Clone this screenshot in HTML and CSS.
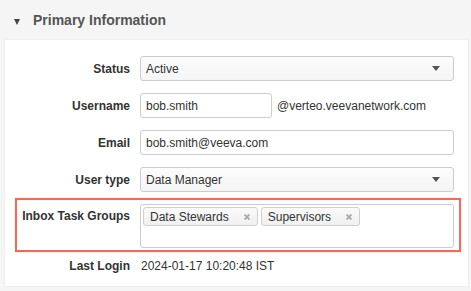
FILE: index.html
```html
<!DOCTYPE html>
<html lang="en">
<head>
    <meta charset="UTF-8">
    <meta name="viewport" content="width=device-width, initial-scale=1.0">
    <title>Primary Information</title>
    <link rel="stylesheet" href="styles.css">
</head>
<body>

    <div class="section-header">
        <span class="caret"></span>
        <span class="section-title">Primary Information</span>
    </div>

    <div class="panel">
        <div class="row">
            <label class="label">Status</label>
            <div class="select">
                <span>Active</span>
                <span class="arrow"></span>
            </div>
        </div>

        <div class="row">
            <label class="label">Username</label>
            <div class="inline">
                <div class="input short">bob.smith</div>
                <span class="suffix">@verteo.veevanetwork.com</span>
            </div>
        </div>

        <div class="row">
            <label class="label">Email</label>
            <div class="input">bob.smith@veeva.com</div>
        </div>

        <div class="row">
            <label class="label">User type</label>
            <div class="select">
                <span>Data Manager</span>
                <span class="arrow"></span>
            </div>
        </div>

        <div class="row highlight">
            <label class="label top">Inbox Task Groups</label>
            <div class="multi">
                <span class="tag">
                    Data Stewards
                    <svg class="remove" width="6" height="6" viewBox="0 0 6 6"><path d="M0.5 0.5 L5.5 5.5 M5.5 0.5 L0.5 5.5" /></svg>
                </span>
                <span class="tag">
                    Supervisors
                    <svg class="remove" width="6" height="6" viewBox="0 0 6 6"><path d="M0.5 0.5 L5.5 5.5 M5.5 0.5 L0.5 5.5" /></svg>
                </span>
            </div>
        </div>

        <div class="row plain">
            <label class="label">Last Login</label>
            <div class="value">2024-01-17 10:20:48 IST</div>
        </div>
    </div>

</body>
</html>
```

FILE: styles.css
```css
body {
    font-family: "Liberation Sans", Arial, sans-serif;
    font-size: 12px;
    color: #333;
    margin: 0;
    padding: 0;
    background-color: #f5f5f5;
}
.section-header {
    height: 39px;
    display: flex;
    align-items: center;
    padding-left: 14px;
}
.caret {
    width: 0;
    height: 0;
    border-left: 3.5px solid transparent;
    border-right: 3.5px solid transparent;
    border-top: 6px solid #444;
    margin-top: 4px;
    margin-right: 13px;
}
.section-title {
    font-size: 14px;
    font-weight: bold;
    color: #555;
    margin-top: 1px;
}
.panel {
    margin: 0 2px 0 4px;
    padding: 10px 7px 5px 10px;
    background-color: #fff;
    border: 1px solid #eee;
}
.row {
    display: grid;
    grid-template-columns: 113px 314px;
    column-gap: 10px;
    align-items: center;
    border: 2px solid transparent;
    padding: 4px 5px 4px 0;
}
.row.highlight {
    align-items: start;
    padding-bottom: 2px;
    border-color: #f26a5c;
    box-shadow: 0 0 1px rgba(242, 106, 92, 0.6);
}
.label {
    font-weight: bold;
    text-align: right;
    line-height: 24px;
}
.label.top {
    line-height: 22px;
    padding-top: 1px;
}
.row.plain .label,
.value {
    line-height: 17px;
}
.select, .input {
    height: 25px;
    box-sizing: border-box;
    border: 1px solid #ccc;
    border-radius: 3px;
    padding: 0 13px 0 5px;
    display: flex;
    align-items: center;
}
.select {
    background: linear-gradient(#fcfcfc, #f5f5f5);
}
.input {
    background-color: #fff;
}
.arrow {
    margin-left: auto;
    width: 0;
    height: 0;
    border-left: 4px solid transparent;
    border-right: 4px solid transparent;
    border-top: 5px solid #555;
}
.inline {
    display: flex;
    align-items: center;
}
.input.short {
    width: 132px;
}
.suffix {
    margin-left: 5px;
}
.multi {
    height: 44px;
    box-sizing: border-box;
    border: 1px solid #ccc;
    border-radius: 3px;
    padding: 2px;
    display: flex;
    align-items: flex-start;
    gap: 3px;
}
.tag {
    height: 19px;
    box-sizing: border-box;
    display: flex;
    align-items: center;
    padding: 0 7px 0 6px;
    border: 1px solid #d0d0d0;
    border-radius: 3px;
    background: linear-gradient(#fafafa, #f0f0f0);
}
.remove {
    margin-left: 15px;
    stroke: #aaa;
    stroke-width: 1.9;
}
.value {
    padding-left: 1px;
}
```
